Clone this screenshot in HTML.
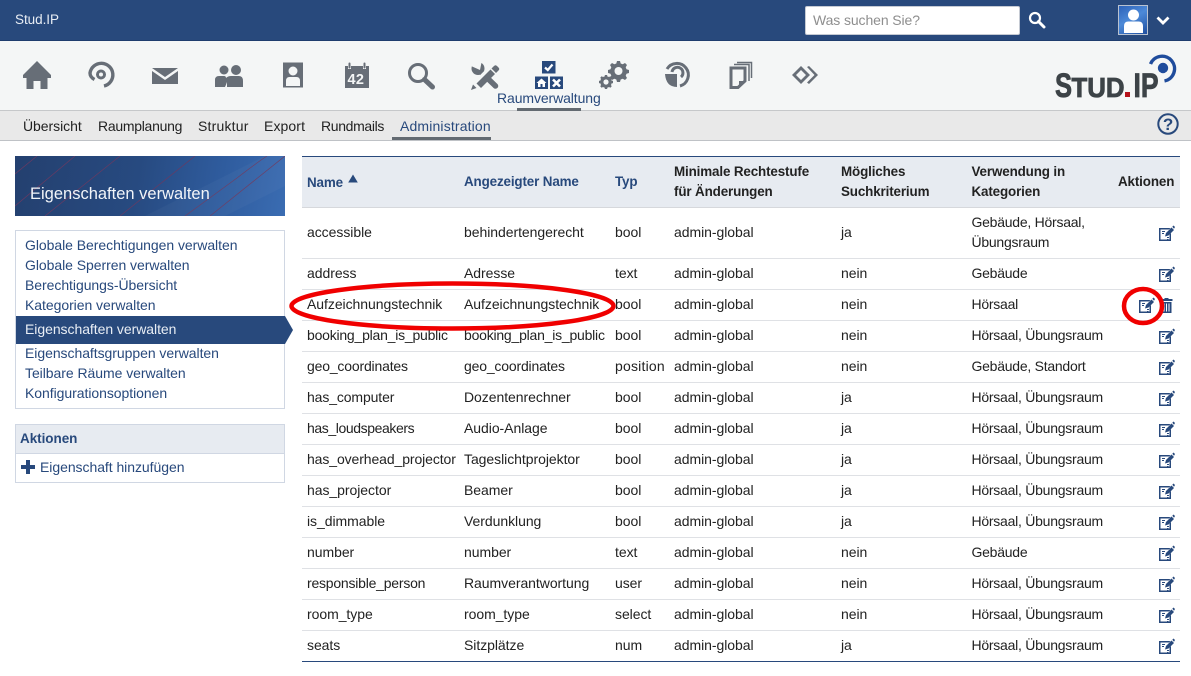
<!DOCTYPE html>
<html lang="de"><head><meta charset="utf-8"><title>Stud.IP</title>
<style>
html,body{margin:0;padding:0;background:#fff}
body{width:1191px;height:676px;position:relative;overflow:hidden;font:14px/18px "Liberation Sans",sans-serif;color:#222;letter-spacing:-.05px}
.a{position:absolute;white-space:nowrap}
.b{position:absolute}
.l{color:#28497c}
table{position:absolute;left:302px;top:156px;width:878px;border-collapse:separate;border-spacing:0;table-layout:fixed;border-top:1px solid #28497c;border-bottom:1px solid #28497c}
th{background:#e7ebf1;height:50px;padding:0 0 0 5px;text-align:left;font-weight:bold;font-size:13.4px;line-height:20px;border-bottom:1px solid #d6d8dc;color:#222;letter-spacing:-.13px}
th.l{color:#28497c}
td{height:28px;padding:0 0 2px 5px;border-bottom:1px solid #dfe1e5;white-space:nowrap;vertical-align:middle}
td:nth-child(6){letter-spacing:-.25px}
tr:last-child td{border-bottom:0}
tr.t td{height:48px;line-height:20px}
svg{display:block}
</style></head><body>
<svg width="0" height="0" style="position:absolute"><defs>
<symbol id="e" viewBox="0 0 16 16"><path d="M0 3H11.500L10 4.500H1.500V14.500H10.500V9.500L12 8V16H0Z" fill="#28497c"/><path d="M3 6H6V7H3ZM3 8H5V9H3ZM8 12H10V13H8ZM8 14H9.500V14.500H8Z" fill="#28497c"/><path d="M6 11.500L7 8L12.500 2.500L15 5L9.500 10.500Z" fill="#28497c"/><path d="M13.300 1.700L14.500 .5L16 2L15 3.700Z" fill="#28497c"/></symbol>
</defs></svg>

<div class="b" style="left:0;top:0;width:1191px;height:40px;background:#28497c"></div>
<div class="b" style="left:0;top:40px;width:1191px;height:1px;background:#1f3d6e"></div>
<div class="a" style="left:15px;top:11px;color:#e8edf4;font-size:13.500px">Stud.IP</div>
<div class="b" style="left:805px;top:6px;width:213px;height:27px;background:#fff;border:1px solid #c5cad3;border-radius:2px"></div>
<div class="a" style="left:813px;top:11px;color:#8e8e8e;font-size:14px;letter-spacing:-.1px">Was suchen Sie?</div>
<svg class="b" style="left:1028px;top:11px" width="18" height="18" viewBox="0 0 18 18"><circle cx="7" cy="7" r="5" fill="none" stroke="#fff" stroke-width="2.200"/><path d="M10.500 10.500L16 16" stroke="#fff" stroke-width="3" stroke-linecap="round"/></svg>
<div class="b" style="left:1118px;top:5px;width:28px;height:28px;border:1px solid #b9c2d0;background:linear-gradient(150deg,#2d62b8 0%,#4d8ad8 45%,#1f4fa0 100%);overflow:hidden">
<svg width="28" height="28" viewBox="0 0 28 28"><circle cx="14.500" cy="9" r="5.500" fill="#fff"/><path d="M5 27V20Q5 15.500 9.500 15.500H19.500Q24 15.500 24 20V27Z" fill="#fff"/></svg></div>
<svg class="b" style="left:1156px;top:15px" width="14" height="11" viewBox="0 0 14 11"><path d="M1.500 2.500L7 8L12.500 2.500" fill="none" stroke="#fff" stroke-width="2.800"/></svg>

<div class="b" style="left:0;top:41px;width:1191px;height:69px;background:#f4f6f6"></div>
<div class="b" style="left:0;top:110px;width:1191px;height:1px;background:#c6c8ca"></div>
<div class="b" style="left:0;top:111px;width:1191px;height:29px;background:#e9e9e9"></div>
<div class="b" style="left:0;top:140px;width:1191px;height:1px;background:#bfc2c6"></div>

<svg class="b" style="left:0;top:41px" width="840" height="70" viewBox="0 0 840 70" fill="#676e77">
<path d="M37 20L51 34V37H47.500V48H40.500V40H33.500V48H26.500V37H23V34Z"/>
<path d="M94.500 38.500Q90 36 90 32A11.500 11.500 0 1 1 104 45" fill="none" stroke="#676e77" stroke-width="3.400"/><circle cx="101" cy="33.500" r="3.500" fill="none" stroke="#676e77" stroke-width="3"/>
<path d="M152 27H178L165 36ZM152 30L165 39L178 30V43H152Z"/>
<circle cx="224" cy="29" r="4.500"/><circle cx="236" cy="29" r="5"/><path d="M215 46V39Q215 35 219 35H224Q226 35 226 37Q228 35 231 35H239Q243 35 243 40V46H227V41Q226 44 225 46Z"/>
<path fill-rule="evenodd" d="M283 21.500H303V46.500H283ZM293 25.500A4.500 4.500 0 1 0 293 34.500A4.500 4.500 0 1 0 293 25.500ZM286 45H300V40Q300 36 296.500 36H289.500Q286 36 286 40Z"/>
<path d="M345 25H348V28H351V25H363V28H366V25H369V47H345Z"/><rect x="348.500" y="21.500" width="2" height="6" rx="1"/><rect x="363.500" y="21.500" width="2" height="6" rx="1"/>
<circle cx="418" cy="32" r="8.500" fill="none" stroke="#676e77" stroke-width="3"/><path d="M424.500 38.500L432.500 46" stroke="#676e77" stroke-width="5" stroke-linecap="round"/>
<path d="M481 31L495.500 45" stroke="#676e77" stroke-width="5.500" stroke-linecap="round"/><circle cx="478" cy="27.500" r="6.500"/><path d="M480 29L471 25L476 18L482 19Z" fill="#f4f6f6"/>
<path d="M476.500 44L494.500 26" stroke="#f4f6f6" stroke-width="9"/><path d="M476.500 43.500L490.500 29.500L495 34L481 48Z" transform="translate(0,-1)"/><path d="M491.500 27.500L494 25Q495.500 23.500 497 25L498.500 26.500Q500 28 498.500 29.500L496 32Z"/><path d="M471 49L473 43.500L476.500 47Z"/>
<path d="M617 20l3 0 .7 2.500 2 .8 2.300-1.300 2 2-1.300 2.300.8 2 2.500.7v3l-2.500.7-.8 2 1.300 2.300-2 2-2.300-1.300-2 .8-.7 2.500h-3l-.7-2.500-2-.8-2.300 1.300-2-2 1.300-2.300-.8-2-2.500-.7v-3l2.500-.7.8-2-1.300-2.300 2-2 2.300 1.300 2-.8Z"/><circle cx="618.500" cy="30" r="4" fill="#f4f6f6"/>
<circle cx="606" cy="41" r="5.800"/><g stroke="#676e77" stroke-width="2.400"><path d="M606 34V48M599 41H613M601 36L611 46M611 36L601 46"/></g><circle cx="606" cy="41" r="2.600" fill="#f4f6f6"/>
<path d="M665 33H677V46Q666 46 665 33Z"/><path d="M667 28A11.500 11.500 0 1 1 680 45" fill="none" stroke="#676e77" stroke-width="3"/><path d="M672 31A5.500 5.500 0 1 1 681 36" fill="none" stroke="#676e77" stroke-width="3"/>
<path d="M731 27H745V40L738 46.500H731Z" fill="none" stroke="#676e77" stroke-width="3"/><path d="M739 45V40H744Z"/><path d="M734 23.500H749V40" fill="none" stroke="#676e77" stroke-width="1.500"/><path d="M737 21.500H751.500V37" fill="none" stroke="#676e77" stroke-width="1.500"/>
<path d="M792 34L801 25L810 34L801 43ZM796 34L801 39L806 34L801 29Z" fill-rule="evenodd"/><path d="M807 26L809 25L818 34L809 43L807 41.500L814.500 34Z"/>
<path d="M517 67H581V70H517Z" fill="#636a71"/>
</svg>

<svg class="b" style="left:535px;top:61px" width="28" height="28" viewBox="0 0 28 28">
<rect x="7" width="13.500" height="12.500" fill="#28497c"/><path d="M10 6.500L12.800 9L17.500 3.500" fill="none" stroke="#fff" stroke-width="2.200"/>
<rect y="15.500" width="13" height="12.500" fill="#28497c"/><path d="M6.500 17.500L11.500 22H10V26H7.500V23H5.500V26H3V22H1.500Z" fill="#fff"/>
<rect x="15" y="15.500" width="13" height="12.500" fill="#28497c"/><path d="M18 18.500L25 25.500M25 18.500L18 25.500" stroke="#fff" stroke-width="2.600"/>
</svg>

<div class="a" style="left:347.500px;top:72px;color:#f4f6f6;font:bold 14.500px/16px 'Liberation Sans',sans-serif;letter-spacing:.3px">42</div>
<div class="a l" style="left:497px;top:89px;font-size:14px;letter-spacing:-.1px">Raumverwaltung</div>

<div class="a" style="left:23px;top:117px">Übersicht</div>
<div class="a" style="left:98px;top:117px;letter-spacing:-.28px">Raumplanung</div>
<div class="a" style="left:198px;top:117px;letter-spacing:.2px">Struktur</div>
<div class="a" style="left:264px;top:117px;letter-spacing:.1px">Export</div>
<div class="a" style="left:321px;top:117px;letter-spacing:-.35px">Rundmails</div>
<div class="a l" style="left:400px;top:117px;letter-spacing:.15px">Administration</div>
<div class="b" style="left:392px;top:137px;width:99px;height:3px;background:#636a71"></div>
<svg class="b" style="left:1157px;top:113px" width="22" height="22" viewBox="0 0 22 22"><circle cx="11" cy="11" r="9.700" fill="none" stroke="#28497c" stroke-width="2"/><text x="11" y="17" text-anchor="middle" font-family="Liberation Sans" font-weight="bold" font-size="17" fill="#28497c">?</text></svg>

<svg class="b" style="left:1040px;top:50px" width="151" height="60" viewBox="1040 50 151 60" font-family="Liberation Sans" font-weight="bold">
<g fill="#3c4347" stroke="#3c4347" stroke-width=".8">
<text x="1055" y="97" font-size="34" textLength="17" lengthAdjust="spacingAndGlyphs">S</text>
<text x="1071.500" y="97" font-size="28" textLength="53" lengthAdjust="spacingAndGlyphs">TUD</text>
<text x="1133.500" y="97" font-size="34" textLength="25" lengthAdjust="spacingAndGlyphs">IP</text></g>
<rect x="1125" y="92" width="5" height="5" fill="#b5121b"/>
<circle cx="1163" cy="68" r="5.200" fill="#1f4c9c"/><path d="M1150.500 64A12.500 12.500 0 1 1 1164.500 81" fill="none" stroke="#1f4c9c" stroke-width="3.400"/>
</svg>

<div class="b" style="left:15px;top:156px;width:270px;height:60px;overflow:hidden;background:linear-gradient(100deg,#24406f 0%,#274a80 45%,#2f5c9e 75%,#3a6cb2 100%)">
<svg width="270" height="60" viewBox="0 0 270 60" fill="none" stroke="#6a3a62" stroke-width=".7"><path d="M0 18L22 0M0 50L60 0M30 60L105 0M105 60L180 0M170 60L222 22Q240 8 252 0M195 60L270 0"/><path d="M130 60L250 0L270 0L270 30L210 60Z" fill="#fff" fill-opacity=".03" stroke="none"/></svg>
<div class="a" style="left:15px;top:28px;color:#f2f5f9;font-size:16.500px;line-height:20px;letter-spacing:0">Eigenschaften verwalten</div></div>

<div class="b" style="left:15px;top:230px;width:268px;height:177px;border:1px solid #d0d7e3"></div>
<div class="a l" style="left:25px;top:236px">Globale Berechtigungen verwalten</div>
<div class="a l" style="left:25px;top:256px">Globale Sperren verwalten</div>
<div class="a l" style="left:25px;top:276px">Berechtigungs-Übersicht</div>
<div class="a l" style="left:25px;top:296px">Kategorien verwalten</div>
<div class="b" style="left:16px;top:316px;width:269px;height:28px;background:#28497c"></div>
<div class="b" style="left:285px;top:316px;width:0;height:0;border-left:8px solid #28497c;border-top:14px solid transparent;border-bottom:14px solid transparent"></div>
<div class="a" style="left:25px;top:320px;color:#e9eef5">Eigenschaften verwalten</div>
<div class="a l" style="left:25px;top:344px">Eigenschaftsgruppen verwalten</div>
<div class="a l" style="left:25px;top:364px">Teilbare Räume verwalten</div>
<div class="a l" style="left:25px;top:384px">Konfigurationsoptionen</div>

<div class="b" style="left:15px;top:424px;width:268px;height:57px;border:1px solid #d0d7e3"></div>
<div class="b" style="left:16px;top:425px;width:268px;height:28px;background:#e7ebf1;border-bottom:1px solid #d0d7e3"></div>
<div class="a l" style="left:20px;top:430px;font-weight:bold;font-size:13.500px">Aktionen</div>
<svg class="b" style="left:21px;top:460px" width="14" height="14" viewBox="0 0 14 14"><path d="M5 0H9V5H14V9H9V14H5V9H0V5H5Z" fill="#28497c"/></svg>
<div class="a l" style="left:40px;top:458px">Eigenschaft hinzufügen</div>

<table>
<colgroup><col style="width:157px"><col style="width:151px"><col style="width:59px"><col style="width:167px"><col style="width:130.500px"><col style="width:146.500px"><col style="width:67px"></colgroup>
<tr><th class="l"><span style="position:relative;top:1px">Name</span></th><th class="l">Angezeigter Name</th><th class="l">Typ</th><th>Minimale Rechtestufe<br>für Änderungen</th><th>Mögliches<br>Suchkriterium</th><th>Verwendung in<br>Kategorien</th><th>Aktionen</th></tr>
<tr class="t"><td>accessible</td><td>behindertengerecht</td><td>bool</td><td>admin-global</td><td>ja</td><td>Gebäude, Hörsaal,<br>Übungsraum</td><td></td></tr>
<tr><td>address</td><td>Adresse</td><td>text</td><td>admin-global</td><td>nein</td><td>Gebäude</td><td></td></tr>
<tr><td>Aufzeichnungstechnik</td><td>Aufzeichnungstechnik</td><td>bool</td><td>admin-global</td><td>nein</td><td>Hörsaal</td><td></td></tr>
<tr><td style="letter-spacing:-.22px">booking_plan_is_public</td><td style="letter-spacing:-.22px">booking_plan_is_public</td><td>bool</td><td>admin-global</td><td>nein</td><td>Hörsaal, Übungsraum</td><td></td></tr>
<tr><td style="letter-spacing:-.18px">geo_coordinates</td><td style="letter-spacing:-.18px">geo_coordinates</td><td style="letter-spacing:.2px">position</td><td>admin-global</td><td>nein</td><td>Gebäude, Standort</td><td></td></tr>
<tr><td style="letter-spacing:-.12px">has_computer</td><td>Dozentenrechner</td><td>bool</td><td>admin-global</td><td>ja</td><td>Hörsaal, Übungsraum</td><td></td></tr>
<tr><td style="letter-spacing:-.4px">has_loudspeakers</td><td>Audio-Anlage</td><td>bool</td><td>admin-global</td><td>ja</td><td>Hörsaal, Übungsraum</td><td></td></tr>
<tr><td style="letter-spacing:-.1px">has_overhead_projector</td><td>Tageslichtprojektor</td><td>bool</td><td>admin-global</td><td>ja</td><td>Hörsaal, Übungsraum</td><td></td></tr>
<tr><td>has_projector</td><td>Beamer</td><td>bool</td><td>admin-global</td><td>ja</td><td>Hörsaal, Übungsraum</td><td></td></tr>
<tr><td>is_dimmable</td><td>Verdunklung</td><td>bool</td><td>admin-global</td><td>ja</td><td>Hörsaal, Übungsraum</td><td></td></tr>
<tr><td>number</td><td>number</td><td>text</td><td>admin-global</td><td>nein</td><td>Gebäude</td><td></td></tr>
<tr><td style="letter-spacing:-.22px">responsible_person</td><td>Raumverantwortung</td><td>user</td><td>admin-global</td><td>nein</td><td>Hörsaal, Übungsraum</td><td></td></tr>
<tr><td>room_type</td><td>room_type</td><td>select</td><td>admin-global</td><td>nein</td><td>Hörsaal, Übungsraum</td><td></td></tr>
<tr><td>seats</td><td>Sitzplätze</td><td>num</td><td>admin-global</td><td>ja</td><td>Hörsaal, Übungsraum</td><td></td></tr>
</table>
<svg class="b" style="left:347px;top:173px" width="12" height="11" viewBox="0 0 12 11"><path d="M6 1.500L10.800 9.500H1.200Z" fill="#28497c"/></svg>

<svg class="b" style="left:1159px;top:225px" width="16" height="16"><use href="#e"/></svg>
<svg class="b" style="left:1159px;top:266px" width="16" height="16"><use href="#e"/></svg>
<svg class="b" style="left:1139px;top:297px" width="16" height="16"><use href="#e"/></svg>
<svg class="b" style="left:1160px;top:298px" width="13" height="15" viewBox="0 0 13 15"><path d="M4.500 0H8.500V1H12.500V3H.5V1H4.500ZM1.500 4H11.500V15H1.500ZM3.500 5.500V13.500H4.500V5.500ZM6 5.500V13.500H7V5.500ZM8.500 5.500V13.500H9.500V5.500Z" fill="#28497c" fill-rule="evenodd"/></svg>
<svg class="b" style="left:1159px;top:328px" width="16" height="16"><use href="#e"/></svg>
<svg class="b" style="left:1159px;top:359px" width="16" height="16"><use href="#e"/></svg>
<svg class="b" style="left:1159px;top:390px" width="16" height="16"><use href="#e"/></svg>
<svg class="b" style="left:1159px;top:421px" width="16" height="16"><use href="#e"/></svg>
<svg class="b" style="left:1159px;top:452px" width="16" height="16"><use href="#e"/></svg>
<svg class="b" style="left:1159px;top:483px" width="16" height="16"><use href="#e"/></svg>
<svg class="b" style="left:1159px;top:514px" width="16" height="16"><use href="#e"/></svg>
<svg class="b" style="left:1159px;top:545px" width="16" height="16"><use href="#e"/></svg>
<svg class="b" style="left:1159px;top:576px" width="16" height="16"><use href="#e"/></svg>
<svg class="b" style="left:1159px;top:607px" width="16" height="16"><use href="#e"/></svg>
<svg class="b" style="left:1159px;top:638px" width="16" height="16"><use href="#e"/></svg>

<svg class="b" style="left:0;top:0;pointer-events:none" width="1191" height="676"><ellipse cx="452.500" cy="306" rx="161" ry="22.500" fill="none" stroke="#f00000" stroke-width="4.500"/><ellipse cx="1143" cy="306" rx="19" ry="17" fill="none" stroke="#f00000" stroke-width="4.500"/></svg>
</body></html>
